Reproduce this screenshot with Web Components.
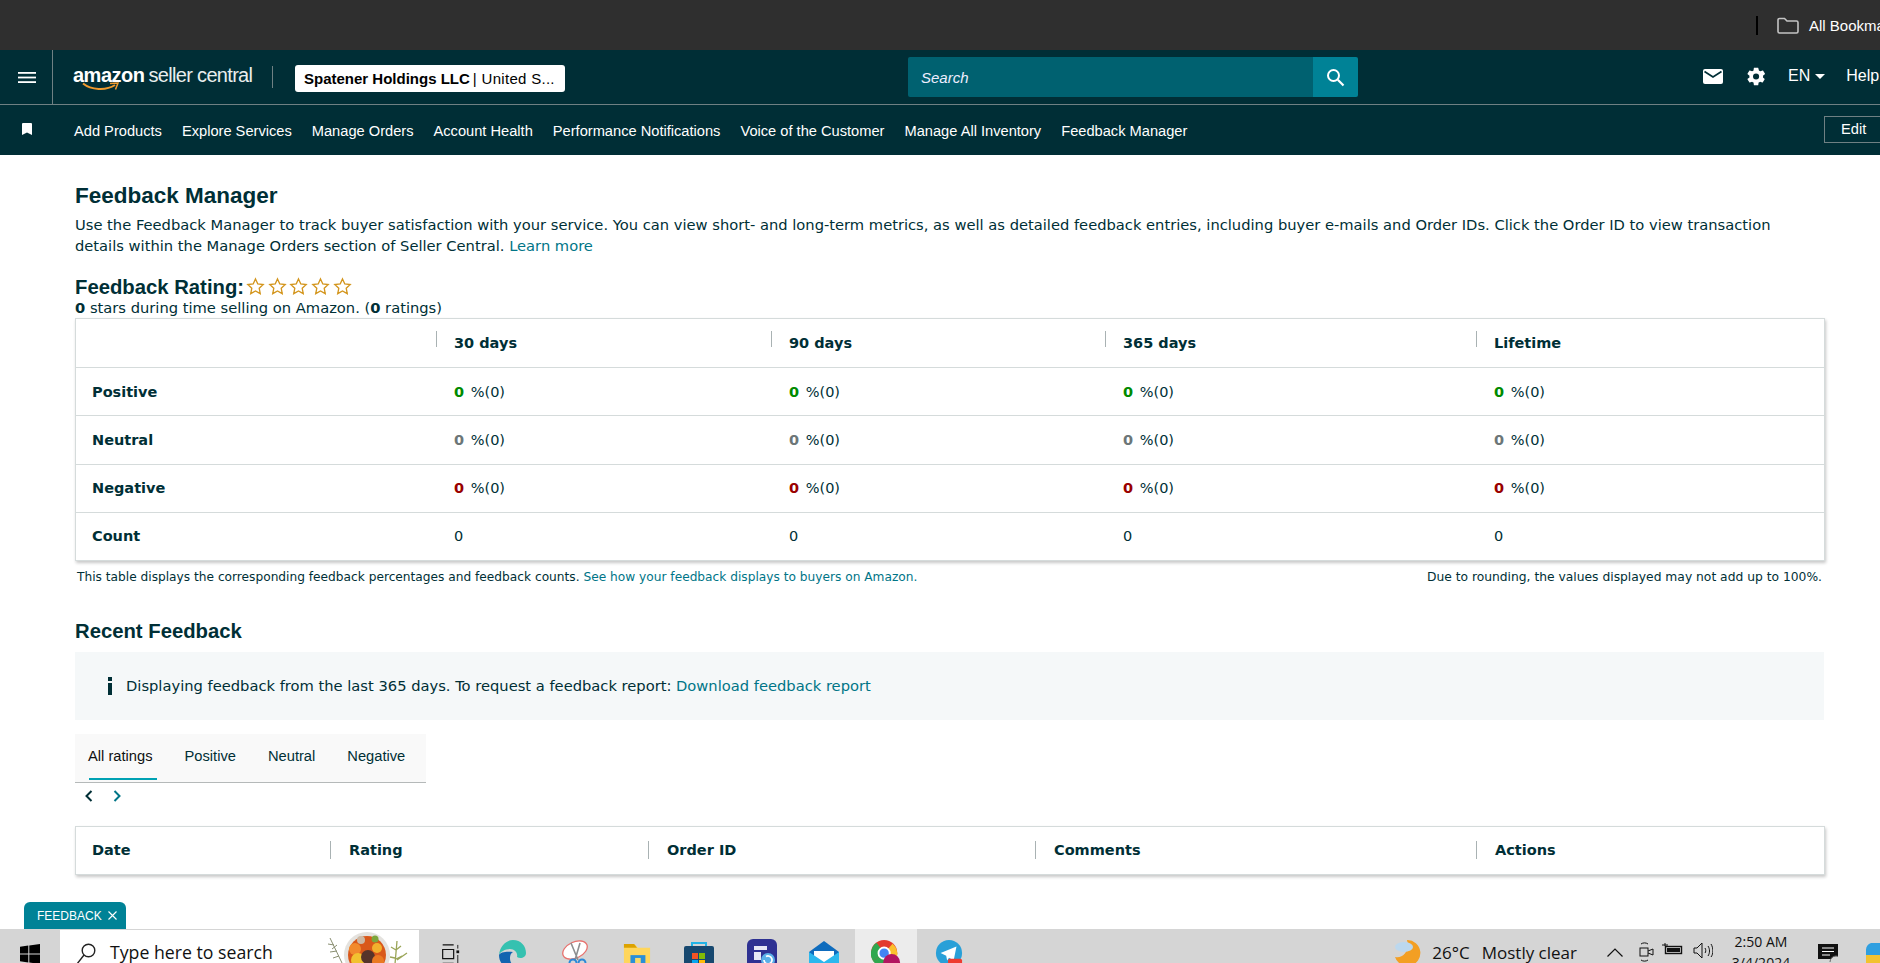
<!DOCTYPE html>
<html lang="en">
<head>
<meta charset="utf-8">
<title>Feedback Manager</title>
<style>
  html, body { margin: 0; height: 100%; overflow: hidden; background: #fff; }
  body { display: flex; flex-direction: column; font-family: "DejaVu Sans", sans-serif; }
  page-main { flex: 1; min-height: 0; }
</style>
</head>
<body>
<browser-strip></browser-strip>
<seller-header></seller-header>
<seller-nav></seller-nav>
<page-main>
  <intro-block></intro-block>
  <metrics-table></metrics-table>
  <recent-feedback></recent-feedback>
</page-main>
<feedback-tab></feedback-tab>
<win-taskbar></win-taskbar>
<script>
class BrowserStrip extends HTMLElement {
  constructor () {
    super()
    this.attachShadow({ mode: 'open' })
  }

  connectedCallback () {
    this.shadowRoot.innerHTML = /* html */`
      <style>
        :host { display: flex; align-items: center; height: 50px; flex: none; background: #2f2f2f; padding-left: 1756px; overflow: hidden; box-sizing: border-box; white-space: nowrap; }
        .bar { width: 2px; height: 19px; background: #000; margin-right: 19px; flex: none; }
        svg { width: 22px; height: 17px; margin-right: 10px; flex: none; }
        span { color: #fff; font: 15px "Liberation Sans", Arial, sans-serif; }
      </style>
      <div class="bar"></div>
      <svg viewBox="0 0 22 17" fill="none" stroke="#c4c4c4" stroke-width="1.6"><path d="M1 3a1.5 1.5 0 0 1 1.5-1.5h5l2.5 2.5h9.5A1.5 1.5 0 0 1 21 5.500v9A1.500 1.500 0 0 1 19.500 16h-17A1.500 1.500 0 0 1 1 14.500z"/></svg>
      <span>All Bookmarks</span>
    `
  }
}
customElements.define('browser-strip', BrowserStrip)

class SellerHeader extends HTMLElement {
  constructor () {
    super()
    this.attachShadow({ mode: 'open' })
  }

  connectedCallback () {
    this.shadowRoot.innerHTML = /* html */`
      <style>
        :host { display: flex; align-items: center; flex: none; height: 54px; background: #002e36; border-bottom: 1px solid #6f8083; box-sizing: content-box; color: #fff; font: 15px "Liberation Sans", Arial, sans-serif; white-space: nowrap; }
        .menu { width: 53px; height: 100%; box-sizing: border-box; border-right: 1px solid #6f8083; display: flex; align-items: center; padding-left: 18px; flex: none; }
        .logo { margin-left: 20px; width: 199px; height: 30px; position: relative; flex: none; line-height: 26px; }
        .logo b { font-size: 20px; letter-spacing: -0.5px; }
        .logo span { font-size: 20px; letter-spacing: -0.68px; margin-left: 4px; color: #e9eeee; }
        .logo svg { position: absolute; left: 9px; top: 20px; }
        .sep { width: 1px; height: 22px; background: #6f8083; flex: none; }
        .account { margin-left: 22px; width: 270px; height: 27px; background: #fff; border-radius: 3px; color: #000; display: flex; align-items: center; padding-left: 9px; box-sizing: border-box; flex: none; position: relative; top: 1px; }
        .account b { margin-right: 3px; }
        .account span { letter-spacing: .3px; }
        .search { margin-left: 343px; width: 405px; height: 40px; background: #006170; color: #eef; display: flex; align-items: center; padding-left: 13px; box-sizing: border-box; font-style: italic; flex: none; border-radius: 2px 0 0 2px; }
        .go { width: 45px; height: 40px; background: #008296; display: flex; align-items: center; justify-content: center; flex: none; border-radius: 0 2px 2px 0; }
        .mail { margin-left: 345px; flex: none; position: relative; top: -1px; }
        .gear { margin-left: 23px; flex: none; position: relative; top: -1px; }
        .lang { margin-left: 21px; font-size: 16px; display: flex; align-items: center; gap: 5px; flex: none; position: relative; top: -1px; }
        .lang i { width: 0; height: 0; border: 5px solid transparent; border-top-color: #fff; border-bottom: 0; }
        .help { margin-left: 21px; font-size: 16px; flex: none; position: relative; top: -1px; }
      </style>
      <div class="menu">
        <svg width="18" height="11" viewBox="0 0 18 11" fill="#fff"><rect width="18" height="1.800"/><rect y="4.600" width="18" height="1.800"/><rect y="9.200" width="18" height="1.800"/></svg>
      </div>
      <div class="logo">
        <b>amazon</b><span>seller central</span>
        <svg width="38" height="10" viewBox="0 0 38 10" fill="none"><path d="M1 1.500C9 8 24 9 33 3" stroke="#f29a2e" stroke-width="2"/><path d="M28 1.500 36 1 33.500 7.500" stroke="#f29a2e" stroke-width="1.500"/></svg>
      </div>
      <div class="sep"></div>
      <div class="account"><b>Spatener Holdings LLC</b><span>| United S...</span></div>
      <div class="search">Search</div>
      <div class="go">
        <svg width="19" height="19" viewBox="0 0 19 19" fill="none" stroke="#fff"><circle cx="7.500" cy="7.500" r="5.500" stroke-width="2"/><path d="M11.800 11.800 17.500 17.500" stroke-width="2.200"/></svg>
      </div>
      <svg class="mail" width="20" height="15" viewBox="0 0 20 15"><rect width="20" height="15" rx="2" fill="#fff"/><path d="M1.500 2.500 10 8l8.500-5.500" fill="none" stroke="#002e36" stroke-width="1.700"/></svg>
      <svg class="gear" width="21" height="21" viewBox="0 0 24 24" fill="#fff"><path fill-rule="evenodd" d="M19.400 13c.1-.3.100-.7.100-1s0-.7-.1-1l2.100-1.600c.2-.2.300-.4.100-.7l-2-3.400c-.1-.2-.4-.3-.6-.2l-2.500 1c-.5-.4-1.100-.7-1.700-1L14 2.400c0-.2-.3-.4-.5-.4h-4c-.2 0-.5.200-.5.400l-.4 2.700c-.6.300-1.200.6-1.700 1l-2.500-1c-.2-.1-.5 0-.6.200l-2 3.400c-.1.300-.1.500.1.700L4 11c-.1.300-.1.700-.1 1s0 .7.100 1l-2.100 1.600c-.2.200-.3.400-.1.700l2 3.400c.1.200.4.300.6.200l2.500-1c.5.400 1.100.7 1.700 1l.4 2.700c0 .2.300.4.500.4h4c.2 0 .5-.2.500-.4l.4-2.700c.6-.3 1.200-.6 1.700-1l2.500 1c.2.100.5 0 .6-.2l2-3.400c.1-.3.100-.5-.1-.7zM11.500 15.500a3.500 3.500 0 1 1 0-7 3.500 3.500 0 0 1 0 7z"/></svg>
      <div class="lang">EN<i></i></div>
      <div class="help">Help</div>
    `
  }
}
customElements.define('seller-header', SellerHeader)

class SellerNav extends HTMLElement {
  constructor () {
    super()
    this.attachShadow({ mode: 'open' })
  }

  connectedCallback () {
    const links = ['Add Products', 'Explore Services', 'Manage Orders', 'Account Health', 'Performance Notifications', 'Voice of the Customer', 'Manage All Inventory', 'Feedback Manager']
    this.shadowRoot.innerHTML = /* html */`
      <style>
        :host { display: flex; align-items: center; flex: none; height: 50px; background: #002e36; color: #fff; font: 14.650px "Liberation Sans", Arial, sans-serif; white-space: nowrap; position: relative; }
        svg { margin-left: 22px; margin-right: 42px; flex: none; position: relative; top: -1px; }
        ul { display: flex; gap: 20px; margin: 0; padding: 2px 0 0; list-style: none; }
        .edit { margin-left: auto; width: 60px; height: 27px; border: 1px solid #6f8083; box-sizing: border-box; padding-left: 16px; line-height: 24px; margin-right: -4px; flex: none; position: relative; top: -1px; }
      </style>
      <svg width="10" height="12" viewBox="0 0 10 12" fill="#fff"><path d="M0 1a1 1 0 0 1 1-1h8a1 1 0 0 1 1 1v11L5 9.500 0 12z"/></svg>
      <ul>${links.map(link => `<li>${link}</li>`).join('')}</ul>
      <div class="edit">Edit</div>
    `
  }
}
customElements.define('seller-nav', SellerNav)

class PageMain extends HTMLElement {
  constructor () {
    super()
    this.attachShadow({ mode: 'open' })
  }

  connectedCallback () {
    this.shadowRoot.innerHTML = /* html */`
      <style>
        :host { display: block; padding: 0 56px 0 75px; color: #002f36; overflow: hidden; }
      </style>
      <slot></slot>
    `
  }
}
customElements.define('page-main', PageMain)

class IntroBlock extends HTMLElement {
  constructor () {
    super()
    this.attachShadow({ mode: 'open' })
  }

  connectedCallback () {
    const star = '<svg width="19" height="19" viewBox="0 0 24 24" fill="none" stroke="#d3951c" stroke-width="1.700"><path d="M12 2.500l2.900 6.300 6.800.8-5 4.700 1.300 6.800-6-3.400-6 3.400 1.300-6.800-5-4.700 6.800-.8z"/></svg>'
    this.shadowRoot.innerHTML = /* html */`
      <style>
        :host { display: block; font: 14.700px/20.500px "DejaVu Sans", sans-serif; }
        h1, h2 { font: bold 20.300px/24px "Liberation Sans", Arial, sans-serif; margin: 0; }
        h1 { padding-top: 29px; font-size: 22.500px; }
        p { margin: 7px 0 0; }
        a { color: #007587; }
        .rating { display: flex; align-items: center; margin-top: 18px; height: 26px; }
        .stars { display: flex; margin-left: 2px; gap: 2.700px; position: relative; top: -1px; }
        .stars svg { width: 19px; height: 19px; display: block; }
        .summary { margin: 0; line-height: 16px; padding-bottom: 2px; }
      </style>
      <h1>Feedback Manager</h1>
      <p>Use the Feedback Manager to track buyer satisfaction with your service. You can view short- and long-term metrics, as well as detailed feedback entries, including buyer e-mails and Order IDs. Click the Order ID to view transaction details within the Manage Orders section of Seller Central. <a>Learn more</a></p>
      <div class="rating"><h2>Feedback Rating:</h2><div class="stars">${star.repeat(5)}</div></div>
      <p class="summary"><b>0</b> stars during time selling on Amazon. (<b>0</b> ratings)</p>
    `
  }
}
customElements.define('intro-block', IntroBlock)

class MetricsTable extends HTMLElement {
  constructor () {
    super()
    this.attachShadow({ mode: 'open' })
  }

  connectedCallback () {
    this.rows = [
      { label: 'Positive', color: '#008a00' },
      { label: 'Neutral', color: '#6c7678' },
      { label: 'Negative', color: '#990000' }
    ]
    const pct = color => `<div class="cell"><b style="color:${color}">0</b> %(0)</div>`
    this.shadowRoot.innerHTML = /* html */`
      <style>
        :host { display: block; font: 14.500px "DejaVu Sans", sans-serif; }
        .card { display: grid; grid-template-columns: 360px 335px 334px 371px 1fr; grid-auto-rows: 48.200px; background: #fff; border: 1px solid #d5dbdb; box-shadow: 1px 2px 3px rgba(0,0,0,.22); margin-right: -1px; }
        .cell { display: flex; align-items: center; white-space: pre; padding-left: 18px; border-top: 1px solid #d5dbdb; }
        .cell b { margin-right: 2px; }
        .label { padding-left: 16px; font-weight: bold; }
        .head { border-top: 0; font-weight: bold; position: relative; }
        .head.sep::before { content: ''; position: absolute; left: 0; top: 12px; height: 16px; width: 1px; background: #a9b2b3; }
        .note { display: flex; justify-content: space-between; font-size: 12.200px; line-height: 14px; margin-top: 9px; padding: 0 2px; }
        .note span:last-child { font-size: 12.300px; }
        a { color: #007587; }
      </style>
      <div class="card">
        <div class="cell head"></div>
        <div class="cell head sep">30 days</div>
        <div class="cell head sep">90 days</div>
        <div class="cell head sep">365 days</div>
        <div class="cell head sep">Lifetime</div>
        ${this.rows.map(row => `<div class="cell label">${row.label}</div>${pct(row.color).repeat(4)}`).join('')}
        <div class="cell label">Count</div>
        ${'<div class="cell">0</div>'.repeat(4)}
      </div>
      <div class="note">
        <span>This table displays the corresponding feedback percentages and feedback counts. <a>See how your feedback displays to buyers on Amazon.</a></span>
        <span>Due to rounding, the values displayed may not add up to 100%.</span>
      </div>
    `
  }
}
customElements.define('metrics-table', MetricsTable)

class RecentFeedback extends HTMLElement {
  constructor () {
    super()
    this.attachShadow({ mode: 'open' })
  }

  connectedCallback () {
    const columns = ['Date', 'Rating', 'Order ID', 'Comments', 'Actions']
    this.shadowRoot.innerHTML = /* html */`
      <style>
        :host { display: block; font: 14.700px "DejaVu Sans", sans-serif; }
        h2 { font: bold 20.300px/24px "Liberation Sans", Arial, sans-serif; margin: 35px 0 9px; }
        .info { display: flex; align-items: center; height: 68px; background: #f5f8f9; padding-left: 32px; box-sizing: border-box; }
        .info svg { margin-right: 13px; flex: none; }
        a { color: #007587; }
        .tabs { display: flex; width: 351px; height: 49px; box-sizing: border-box; margin-top: 14px; background: #f9f9f9; border-bottom: 1px solid #b5b9b9; font: 14.700px "Liberation Sans", Arial, sans-serif; padding-left: 13px; white-space: nowrap; }
        .tab { display: flex; align-items: center; padding-bottom: 3px; position: relative; margin-right: 32px; box-sizing: border-box; flex: none; }
        .tab.on { color: #0f1111; }
        .tab.on::after { content: ''; position: absolute; left: 1px; right: -4px; bottom: 2px; height: 2px; background: #00a1b3; }
        .arrows { display: flex; gap: 20px; padding-left: 10px; height: 27px; align-items: center; }
        .head { display: grid; grid-template-columns: 254px 318px 387px 441px 1fr; height: 49px; border: 1px solid #d5dbdb; box-sizing: border-box; box-shadow: 1px 2px 3px rgba(0,0,0,.22); margin: 16px -1px 0 0; background: #fff; font-weight: bold; font-size: 14.500px; }
        .col { display: flex; align-items: center; padding-left: 16px; position: relative; }
        .col + .col { padding-left: 19px; }
        .col + .col::before { content: ''; position: absolute; left: 0; top: 14px; height: 18px; width: 1px; background: #a9b2b3; }
      </style>
      <h2>Recent Feedback</h2>
      <div class="info">
        <svg width="6" height="18" viewBox="0 0 6 18" fill="#002f36"><rect x="1" width="4" height="4"/><rect x="1" y="6" width="4" height="12"/></svg>
        <span>Displaying feedback from the last 365 days. To request a feedback report: <a>Download feedback report</a></span>
      </div>
      <div class="tabs">
        <div class="tab on">All ratings</div>
        <div class="tab">Positive</div>
        <div class="tab">Neutral</div>
        <div class="tab">Negative</div>
      </div>
      <div class="arrows">
        <svg width="8" height="12" viewBox="0 0 8 12" fill="none" stroke="#002f36" stroke-width="2"><path d="M6.500 1 1.500 6l5 5"/></svg>
        <svg width="8" height="12" viewBox="0 0 8 12" fill="none" stroke="#007587" stroke-width="2"><path d="M1.500 1l5 5-5 5"/></svg>
      </div>
      <div class="head">${columns.map(name => `<div class="col">${name}</div>`).join('')}</div>
    `
  }
}
customElements.define('recent-feedback', RecentFeedback)

class FeedbackTab extends HTMLElement {
  constructor () {
    super()
    this.attachShadow({ mode: 'open' })
  }

  connectedCallback () {
    this.shadowRoot.innerHTML = /* html */`
      <style>
        :host { position: absolute; left: 24px; top: 902px; width: 102px; height: 27px; box-sizing: border-box; background: #008296; color: #fff; border-radius: 6px 6px 0 0; display: flex; align-items: center; padding-left: 13px; font: 12px "Liberation Sans", Arial, sans-serif; gap: 6px; }
      </style>
      <span>FEEDBACK</span>
      <svg width="9" height="9" viewBox="0 0 9 9" fill="none" stroke="#fff" stroke-width="1.100"><path d="M.5.500l8 8M8.500.500l-8 8"/></svg>
    `
  }
}
customElements.define('feedback-tab', FeedbackTab)

class WinTaskbar extends HTMLElement {
  constructor () {
    super()
    this.attachShadow({ mode: 'open' })
  }

  connectedCallback () {
    const icons = [
      { w: 22, svg: '<g fill="none" stroke="#111" stroke-width="1.300"><path d="M3 1h12M3 6h12v10H3zM3 21h12"/></g><rect x="18" y="7" width="3" height="3" fill="#111"/><path d="M19.500 1v4M19.500 12v9" stroke="#111"/>', box: '0 0 22 24', y: 5 },
      { w: 30, svg: '<path d="M2 16C3 6 10 1 16 1c8 0 13 6 13 13 0 5-6 6-9 4 1-4-2-8-7-8S3 13 2 16z" fill="#35c1b0"/><path d="M2 16c0 9 7 14 15 14 3 0 5-1 6-2-6 0-10-3-10-9 0-3 1-5 3-6-6-1-13 0-14 3z" fill="#1264b0"/>', box: '0 0 30 30', y: 0 },
      { w: 28, svg: '<ellipse cx="14" cy="10" rx="13" ry="8" fill="#fff" stroke="#e8716d" stroke-width="1.300" transform="rotate(-25 14 10)"/><path d="M10 3l7 17M19 3l-5 17" stroke="#8d8f91" stroke-width="1.600"/><circle cx="12" cy="23" r="3.500" fill="none" stroke="#2b88d8" stroke-width="2"/><circle cx="21" cy="23" r="3.500" fill="none" stroke="#2b88d8" stroke-width="2"/>', box: '0 0 28 28', y: 1 },
      { w: 28, svg: '<path d="M0 2h12l3 3h13v24H0z" fill="#ffd65c"/><path d="M0 1h11l3 4H0z" fill="#dca200"/><rect x="7" y="13" width="16" height="17" fill="#2a8fd8"/><rect x="12" y="16" width="6" height="6" fill="#f8d96a"/>', box: '0 0 28 30', y: 4 },
      { w: 30, svg: '<path d="M8 8V3h14v5" fill="none" stroke="#22b4e6" stroke-width="2"/><rect y="6" width="30" height="25" rx="2" fill="#17486f"/><rect x="8" y="13" width="6" height="6" fill="#f35325"/><rect x="15" y="13" width="6" height="6" fill="#81bc06"/><rect x="8" y="20" width="6" height="6" fill="#05a6f0"/><rect x="15" y="20" width="6" height="6" fill="#ffba08"/>', box: '0 0 30 30', y: 1 },
      { w: 30, svg: '<rect width="30" height="30" rx="6" fill="#2e3192"/><path d="M7 7h13v4H7zM7 13h7v8H7z" fill="#e6e8f5"/><circle cx="21" cy="21" r="7" fill="#5ab0e8"/><path d="M17 21a4 4 0 1 0 2-3.500" fill="none" stroke="#fff" stroke-width="1.700"/>', box: '0 0 30 30', y: 0 },
      { w: 30, svg: '<path d="M0 12 15 1l15 11v18H0z" fill="#0f6cbd"/><path d="M5 11h20v12H5z" fill="#fff"/><path d="M0 12 15 22 30 12v18H0z" fill="#2cb8ee"/>', box: '0 0 30 30', y: 1 },
      { w: 30, hot: true, svg: '<circle cx="14" cy="14" r="14" fill="#e33b2e"/><path d="M14 14 2 22a14 14 0 0 0 12 6z" fill="#2fa84f"/><path d="M14 14l-12 8A14 14 0 0 1 6 3z" fill="#2fa84f"/><path d="M14 14l12 8a14 14 0 0 0-3-18z" fill="#fbc02d"/><circle cx="14" cy="14" r="6" fill="#4285f4" stroke="#fff" stroke-width="2"/><circle cx="22" cy="24" r="9" fill="#b31560"/>', box: '0 0 32 32', y: 1 },
      { w: 28, svg: '<circle cx="14" cy="14" r="14" fill="#29a0d8"/><path d="M5 14 22 7l-3 15-5-3-2 3-1-5z" fill="#fff"/><rect x="13" y="20" width="15" height="10" rx="2" fill="#ee3b30"/>', box: '0 0 28 30', y: 1 }
    ]
    this.shadowRoot.innerHTML = /* html */`
      <style>
        :host { display: flex; flex: none; height: 34px; background: #d5d5d5; overflow: hidden; color: #111; font: 17.700px "Open Sans", sans-serif; white-space: nowrap; align-items: stretch; box-sizing: border-box; }
        .start { width: 60px; display: flex; padding: 15px 0 0 20px; box-sizing: border-box; flex: none; }
        .box { width: 359px; margin-top: 1px; background: #fff; display: flex; padding-left: 16px; box-sizing: border-box; position: relative; flex: none; }
        .box svg.glass { margin-top: 13px; flex: none; }
        .box span { margin: 6px 0 0 14px; line-height: 32px; }
        .food { position: absolute; left: 265px; top: 1px; }
        .slot { width: 62.300px; display: flex; justify-content: center; flex: none; box-sizing: border-box; padding-top: 10px; }
        .slot.hot { background: #ececec; }
        .tray { margin-left: auto; display: flex; flex: none; position: relative; }
        .moon { margin: 10px 10px 0 0; flex: none; }
        .weather { margin-top: 8px; line-height: 32px; font-size: 17px; }
        .weather span + span { margin-left: 12px; }
        .sys { margin: 19px 0 0 16px; flex: none; }
        .clock { width: 90px; margin: 2px 12px 0 3px; text-align: center; font-size: 14px; line-height: 21px; flex: none; }
        .note { margin: 15px 28px 0 0; flex: none; }
        .colors { margin-top: 14px; flex: none; margin-right: -4px; }
      </style>
      <div class="start">
        <svg width="20" height="20" viewBox="0 0 20 20" fill="#000"><path d="M0 2.800 8.300 1.600v7.800H0zM9.300 1.500 20 0v9.400H9.300zM0 10.500h8.300v7.900L0 17.200zM9.300 10.500H20V20L9.300 18.500z"/></svg>
      </div>
      <div class="box">
        <svg class="glass" width="20" height="22" viewBox="0 0 20 22" fill="none" stroke="#222" stroke-width="1.400"><circle cx="12.500" cy="7.500" r="6.300"/><path d="M8 12 1 21"/></svg>
        <span>Type here to search</span>
        <svg class="food" width="86" height="34" viewBox="0 0 86 34">
          <path d="M5 7 17 32M3 13l6 1M5 21l7-1M12 14l-5 4M14 25l-6 2" stroke="#8a8f72" fill="none"/>
          <circle cx="42" cy="24" r="23" fill="#e4e2de"/><circle cx="42" cy="24" r="19" fill="#d9581a"/>
          <circle cx="30" cy="18" r="6" fill="#f28a2d"/><circle cx="36" cy="9" r="4" fill="#cdb9a5"/><circle cx="50" cy="8" r="3.500" fill="#7da63c"/><circle cx="33" cy="29" r="7" fill="#f2c230"/><circle cx="43" cy="26" r="7" fill="#56342a"/><circle cx="52" cy="17" r="5" fill="#f2b02d"/><circle cx="53" cy="30" r="6" fill="#ea7a22"/>
          <path d="M72 10 70 33M66 16l5 3M76 15l-5 4M65 26l5 1M77 25l-6 3M82 22l-10 7" stroke="#9aa558" fill="none" stroke-width="1.300"/>
        </svg>
      </div>
      ${icons.map(icon => `<div class="slot${icon.hot ? ' hot' : ''}"><svg width="${icon.w}" height="${icon.w}" viewBox="${icon.box}" style="margin-top:${icon.y}px">${icon.svg}</svg></div>`).join('')}
      <div class="tray">
        <svg class="moon" width="28" height="28" viewBox="0 0 28 28"><path d="M13 1a13 13 0 1 1-12 17c8 2 15-6 12-17z" fill="#f39f23"/><ellipse cx="10" cy="8" rx="9" ry="5" fill="#bcd8ee"/></svg>
        <div class="weather"><span>26°C</span><span>Mostly clear</span></div>
        <svg class="sys" style="margin-left:30px;margin-top:19px" width="16" height="9" viewBox="0 0 16 9" fill="none" stroke="#111" stroke-width="1.200"><path d="M.5 8.500 8 1l7.500 7.500"/></svg>
        <svg class="sys" style="margin-top:13px" width="15" height="20" viewBox="0 0 15 20" fill="none" stroke="#111" stroke-width="1"><rect x="1" y="6" width="8" height="8"/><path d="M9 9l5-2v6l-5-2M2 2c2-1.500 5-1.500 7 0M2 18c2 1.500 5 1.500 7 0"/></svg>
        <svg class="sys" style="margin:14px 0 0 7px" width="22" height="13" viewBox="0 0 22 13" fill="none" stroke="#111"><rect x="4.500" y="3.500" width="16" height="7" stroke-width="1.400"/><rect x="6" y="5" width="13" height="4" fill="#111" stroke="none"/><path d="M1 2h6M4 0v3"/></svg>
        <svg class="sys" style="margin:13px 0 0 10px" width="20" height="18" viewBox="0 0 20 18" fill="none" stroke="#111"><path d="M1 6h3l5-5v15l-5-5H1zM12 6c1 1.500 1 4 0 5M15 4c2 3 2 7 0 10M18 2c2.500 4 2.500 10 0 13"/></svg>
        <div class="clock">2:50 AM<br>3/4/2024</div>
        <svg class="note" width="20" height="18" viewBox="0 0 20 18"><path d="M0 0h20v15H0z" fill="#111"/><path d="M4 4h12M4 7.500h12M4 11h8" stroke="#fff"/><circle cx="18" cy="18" r="6" fill="#d5d5d5" stroke="#666"/></svg>
        <svg class="colors" width="18" height="20" viewBox="0 0 18 20"><path d="M5 0h13v20H0V8a8 8 0 0 1 5-8z" fill="#2f9fe0"/><path d="M0 12h18v8H0z" fill="#f2c230"/></svg>
      </div>
    `
  }
}
customElements.define('win-taskbar', WinTaskbar)
</script>
</body>
</html>
